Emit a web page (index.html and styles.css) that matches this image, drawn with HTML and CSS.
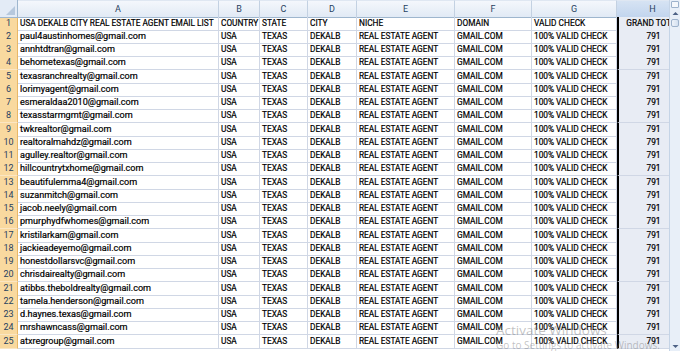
FILE: index.html
```html
<!DOCTYPE html>
<html>
<head>
<meta charset="utf-8">
<link rel="stylesheet" href="styles.css">
</head>
<body>
<div class="app">
  <div class="sheet">
    <div class="row hdr">
      <div class="corner"></div>
      <div class="ch">A</div><div class="ch">B</div><div class="ch">C</div><div class="ch">D</div><div class="ch">E</div><div class="ch">F</div><div class="ch">G</div><div class="ch sel">H</div>
    </div>
    <div class="row"><div class="rh">1</div><div class="c u">USA DEKALB CITY REAL ESTATE AGENT EMAIL LIST</div><div class="c u">COUNTRY</div><div class="c u">STATE</div><div class="c u">CITY</div><div class="c u">NICHE</div><div class="c u">DOMAIN</div><div class="c u">VALID CHECK</div><div class="c u h">GRAND TOTAL</div></div>
    <div class="row"><div class="rh">2</div><div class="c">paul4austinhomes@gmail.com</div><div class="c u">USA</div><div class="c u">TEXAS</div><div class="c u">DEKALB</div><div class="c u">REAL ESTATE AGENT</div><div class="c u">GMAIL.COM</div><div class="c u">100% VALID CHECK</div><div class="c u h">791</div></div>
    <div class="row"><div class="rh">3</div><div class="c">annhtdtran@gmail.com</div><div class="c u">USA</div><div class="c u">TEXAS</div><div class="c u">DEKALB</div><div class="c u">REAL ESTATE AGENT</div><div class="c u">GMAIL.COM</div><div class="c u">100% VALID CHECK</div><div class="c u h">791</div></div>
    <div class="row"><div class="rh">4</div><div class="c">behometexas@gmail.com</div><div class="c u">USA</div><div class="c u">TEXAS</div><div class="c u">DEKALB</div><div class="c u">REAL ESTATE AGENT</div><div class="c u">GMAIL.COM</div><div class="c u">100% VALID CHECK</div><div class="c u h">791</div></div>
    <div class="row"><div class="rh">5</div><div class="c">texasranchrealty@gmail.com</div><div class="c u">USA</div><div class="c u">TEXAS</div><div class="c u">DEKALB</div><div class="c u">REAL ESTATE AGENT</div><div class="c u">GMAIL.COM</div><div class="c u">100% VALID CHECK</div><div class="c u h">791</div></div>
    <div class="row"><div class="rh">6</div><div class="c">lorimyagent@gmail.com</div><div class="c u">USA</div><div class="c u">TEXAS</div><div class="c u">DEKALB</div><div class="c u">REAL ESTATE AGENT</div><div class="c u">GMAIL.COM</div><div class="c u">100% VALID CHECK</div><div class="c u h">791</div></div>
    <div class="row"><div class="rh">7</div><div class="c">esmeraldaa2010@gmail.com</div><div class="c u">USA</div><div class="c u">TEXAS</div><div class="c u">DEKALB</div><div class="c u">REAL ESTATE AGENT</div><div class="c u">GMAIL.COM</div><div class="c u">100% VALID CHECK</div><div class="c u h">791</div></div>
    <div class="row"><div class="rh">8</div><div class="c">texasstarmgmt@gmail.com</div><div class="c u">USA</div><div class="c u">TEXAS</div><div class="c u">DEKALB</div><div class="c u">REAL ESTATE AGENT</div><div class="c u">GMAIL.COM</div><div class="c u">100% VALID CHECK</div><div class="c u h">791</div></div>
    <div class="row"><div class="rh">9</div><div class="c">twkrealtor@gmail.com</div><div class="c u">USA</div><div class="c u">TEXAS</div><div class="c u">DEKALB</div><div class="c u">REAL ESTATE AGENT</div><div class="c u">GMAIL.COM</div><div class="c u">100% VALID CHECK</div><div class="c u h">791</div></div>
    <div class="row"><div class="rh">10</div><div class="c">realtoralmahdz@gmail.com</div><div class="c u">USA</div><div class="c u">TEXAS</div><div class="c u">DEKALB</div><div class="c u">REAL ESTATE AGENT</div><div class="c u">GMAIL.COM</div><div class="c u">100% VALID CHECK</div><div class="c u h">791</div></div>
    <div class="row"><div class="rh">11</div><div class="c">agulley.realtor@gmail.com</div><div class="c u">USA</div><div class="c u">TEXAS</div><div class="c u">DEKALB</div><div class="c u">REAL ESTATE AGENT</div><div class="c u">GMAIL.COM</div><div class="c u">100% VALID CHECK</div><div class="c u h">791</div></div>
    <div class="row"><div class="rh">12</div><div class="c">hillcountrytxhome@gmail.com</div><div class="c u">USA</div><div class="c u">TEXAS</div><div class="c u">DEKALB</div><div class="c u">REAL ESTATE AGENT</div><div class="c u">GMAIL.COM</div><div class="c u">100% VALID CHECK</div><div class="c u h">791</div></div>
    <div class="row"><div class="rh">13</div><div class="c">beautifulemma4@gmail.com</div><div class="c u">USA</div><div class="c u">TEXAS</div><div class="c u">DEKALB</div><div class="c u">REAL ESTATE AGENT</div><div class="c u">GMAIL.COM</div><div class="c u">100% VALID CHECK</div><div class="c u h">791</div></div>
    <div class="row"><div class="rh">14</div><div class="c">suzanmitch@gmail.com</div><div class="c u">USA</div><div class="c u">TEXAS</div><div class="c u">DEKALB</div><div class="c u">REAL ESTATE AGENT</div><div class="c u">GMAIL.COM</div><div class="c u">100% VALID CHECK</div><div class="c u h">791</div></div>
    <div class="row"><div class="rh">15</div><div class="c">jacob.neely@gmail.com</div><div class="c u">USA</div><div class="c u">TEXAS</div><div class="c u">DEKALB</div><div class="c u">REAL ESTATE AGENT</div><div class="c u">GMAIL.COM</div><div class="c u">100% VALID CHECK</div><div class="c u h">791</div></div>
    <div class="row"><div class="rh">16</div><div class="c">pmurphydfwhomes@gmail.com</div><div class="c u">USA</div><div class="c u">TEXAS</div><div class="c u">DEKALB</div><div class="c u">REAL ESTATE AGENT</div><div class="c u">GMAIL.COM</div><div class="c u">100% VALID CHECK</div><div class="c u h">791</div></div>
    <div class="row"><div class="rh">17</div><div class="c">kristilarkam@gmail.com</div><div class="c u">USA</div><div class="c u">TEXAS</div><div class="c u">DEKALB</div><div class="c u">REAL ESTATE AGENT</div><div class="c u">GMAIL.COM</div><div class="c u">100% VALID CHECK</div><div class="c u h">791</div></div>
    <div class="row"><div class="rh">18</div><div class="c">jackieadeyemo@gmail.com</div><div class="c u">USA</div><div class="c u">TEXAS</div><div class="c u">DEKALB</div><div class="c u">REAL ESTATE AGENT</div><div class="c u">GMAIL.COM</div><div class="c u">100% VALID CHECK</div><div class="c u h">791</div></div>
    <div class="row"><div class="rh">19</div><div class="c">honestdollarsvc@gmail.com</div><div class="c u">USA</div><div class="c u">TEXAS</div><div class="c u">DEKALB</div><div class="c u">REAL ESTATE AGENT</div><div class="c u">GMAIL.COM</div><div class="c u">100% VALID CHECK</div><div class="c u h">791</div></div>
    <div class="row"><div class="rh">20</div><div class="c">chrisdairealty@gmail.com</div><div class="c u">USA</div><div class="c u">TEXAS</div><div class="c u">DEKALB</div><div class="c u">REAL ESTATE AGENT</div><div class="c u">GMAIL.COM</div><div class="c u">100% VALID CHECK</div><div class="c u h">791</div></div>
    <div class="row"><div class="rh">21</div><div class="c">atibbs.theboldrealty@gmail.com</div><div class="c u">USA</div><div class="c u">TEXAS</div><div class="c u">DEKALB</div><div class="c u">REAL ESTATE AGENT</div><div class="c u">GMAIL.COM</div><div class="c u">100% VALID CHECK</div><div class="c u h">791</div></div>
    <div class="row"><div class="rh">22</div><div class="c">tamela.henderson@gmail.com</div><div class="c u">USA</div><div class="c u">TEXAS</div><div class="c u">DEKALB</div><div class="c u">REAL ESTATE AGENT</div><div class="c u">GMAIL.COM</div><div class="c u">100% VALID CHECK</div><div class="c u h">791</div></div>
    <div class="row"><div class="rh">23</div><div class="c">d.haynes.texas@gmail.com</div><div class="c u">USA</div><div class="c u">TEXAS</div><div class="c u">DEKALB</div><div class="c u">REAL ESTATE AGENT</div><div class="c u">GMAIL.COM</div><div class="c u">100% VALID CHECK</div><div class="c u h">791</div></div>
    <div class="row"><div class="rh">24</div><div class="c">mrshawncass@gmail.com</div><div class="c u">USA</div><div class="c u">TEXAS</div><div class="c u">DEKALB</div><div class="c u">REAL ESTATE AGENT</div><div class="c u">GMAIL.COM</div><div class="c u">100% VALID CHECK</div><div class="c u h">791</div></div>
    <div class="row"><div class="rh">25</div><div class="c">atxregroup@gmail.com</div><div class="c u">USA</div><div class="c u">TEXAS</div><div class="c u">DEKALB</div><div class="c u">REAL ESTATE AGENT</div><div class="c u">GMAIL.COM</div><div class="c u">100% VALID CHECK</div><div class="c u h">791</div></div>
  </div>
  <div class="vscroll">
    <div class="split"></div>
    <div class="sbtn"><svg width="9" height="9" viewBox="0 0 9 9"><path d="M1.5 6 L4.5 3 L7.5 6 Z" fill="#4d6185"/></svg></div>
    <div class="thumb"></div>
    <div class="track"></div>
    <div class="sbtn"><svg width="9" height="9" viewBox="0 0 9 9"><path d="M1.5 3 L4.5 6 L7.5 3 Z" fill="#4d6185"/></svg></div>
  </div>
  <div class="activate">
    <div class="act1">Activate Windows</div>
    <div class="act2">Go to Settings to activate Windows.</div>
  </div>
</div>
</body>
</html>
```

FILE: styles.css
```css
html, body {
  margin: 0;
  padding: 0;
  background: #ffffff;
}
body {
  width: 680px;
  height: 351px;
  overflow: hidden;
  font-family: Roboto, "Liberation Sans", Arial, sans-serif;
}
.app {
  position: relative;
  display: flex;
  height: 351px;
}
.sheet {
  flex: none;
  width: 669px;
  overflow: hidden;
}
.row {
  display: grid;
  grid-template-columns: 18px 201px 41px 48px 49px 98px 77px 85px 72px;
  height: 13px;
}
.row:nth-child(4n+1) {
  height: 14px;
}
.row.hdr {
  height: 17px;
}
.corner {
  background: #e3ebf6;
  border-right: 1px solid #9eb6ce;
  border-bottom: 1px solid #9eb6ce;
  box-sizing: border-box;
  position: relative;
}
.corner::after {
  content: "";
  position: absolute;
  right: 2px;
  bottom: 2px;
  width: 0;
  height: 0;
  border-left: 9px solid transparent;
  border-bottom: 9px solid #b6c8dd;
}
.ch {
  box-sizing: border-box;
  background: linear-gradient(#f4f7fc, #e1eaf5);
  border-right: 1px solid #c3d1e2;
  border-bottom: 1px solid #9eb6ce;
  border-top: 1px solid #dfe7f2;
  text-align: center;
  font-size: 9px;
  line-height: 16px;
  color: #27415f;
}
.ch.sel {
  background: linear-gradient(#d6e3f3, #c2d5ee);
}
.rh {
  box-sizing: border-box;
  background: #f9d99f;
  border-right: 1px solid #e9b866;
  border-bottom: 1px solid #fbe6c3;
  text-align: center;
  font-size: 9px;
  line-height: 13px;
  color: #27415f;
}
.c {
  box-sizing: border-box;
  border-right: 1px solid #d0d7e5;
  border-bottom: 1px solid #d0d7e5;
  padding: 0 2px;
  white-space: nowrap;
  overflow: hidden;
  font-size: 9.1px;
  line-height: 13px;
  color: #000000;
  -webkit-text-stroke: 0.2px #000000;
}
.c.u {
  font-size: 8.3px;
}
.c.h {
  background: #e8ecf4;
  border-left: 2px solid #000000;
  text-align: center;
  overflow: visible;
}
.vscroll {
  flex: none;
  width: 11px;
  box-sizing: border-box;
  border-left: 1px solid #c5d4e6;
  background: #e8eff8;
  display: flex;
  flex-direction: column;
}
.split {
  height: 5px;
  margin: 1px 1px 0;
  background: #f4f7fb;
  border: 1px solid #9db2cc;
  border-radius: 1px;
}
.sbtn {
  height: 10px;
  display: flex;
  align-items: center;
  justify-content: center;
}
.thumb {
  height: 8px;
  margin: 1px 1px;
  box-sizing: border-box;
  border: 1px solid #9db2cc;
  border-radius: 2px;
  background: linear-gradient(90deg, #eef3fa, #d3e0f0);
}
.track {
  flex: 1;
}
.activate {
  position: absolute;
  left: 496px;
  top: 322px;
  font-family: "Open Sans", "Noto Sans", sans-serif;
  color: rgba(120, 120, 120, 0.45);
  white-space: nowrap;
}
.act1 {
  font-size: 13.5px;
  line-height: 17px;
}
.act2 {
  font-size: 10px;
  line-height: 13px;
}
```
